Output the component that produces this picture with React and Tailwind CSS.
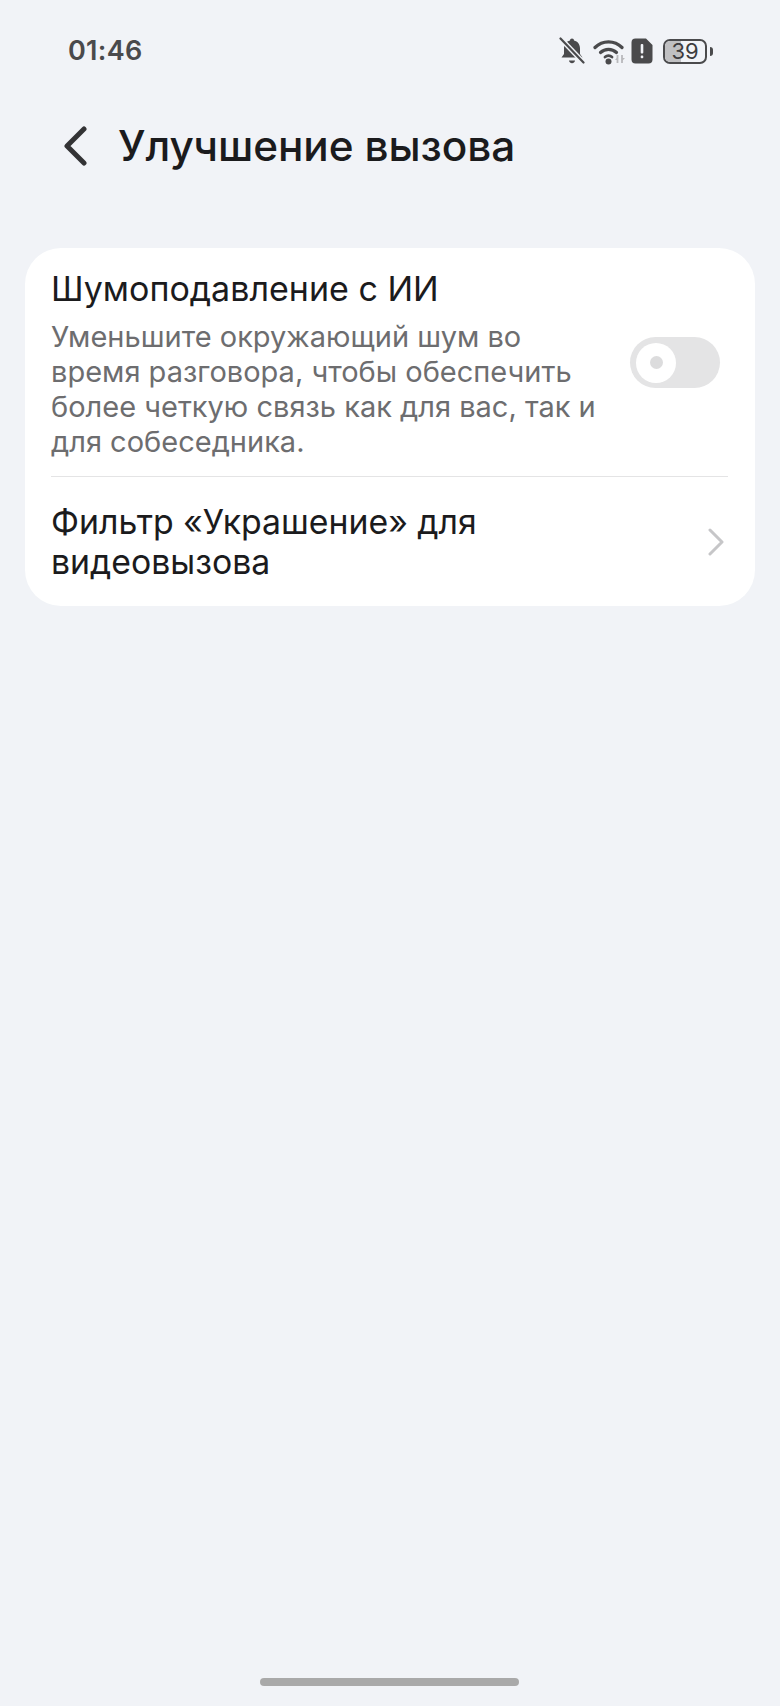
const BellOff = () => (
  <svg width="26" height="28" viewBox="0 0 26 28" fill="none">
    <path d="M13 1.500c1.200 0 2 .8 2 1.900 3.800.9 6 4 6 8v5.500l2.500 3.600H2.500L5 16.900v-5.500c0-4 2.200-7.100 6-8 0-1.100.8-1.900 2-1.900z" fill="#4a4a4c" />
    <path d="M10 23.500h6c-.3 1.700-1.500 2.800-3 2.800s-2.700-1.100-3-2.800z" fill="#4a4a4c" />
    <path d="M2.500 2.500 24 25" stroke="#f1f3f7" strokeWidth="5" />
    <path d="M1.500 1.500 24.500 25.500" stroke="#4a4a4c" strokeWidth="2.200" strokeLinecap="round" />
  </svg>
)

const Wifi = () => (
  <svg width="33" height="27" viewBox="0 0 33 27" fill="none">
    <path d="M2 9.500C9.500 2 21.500 2 29 9.500" stroke="#4a4a4c" strokeWidth="3.200" strokeLinecap="round" />
    <path d="M7.500 14.500c4.500-4.300 11.500-4.300 16 0" stroke="#4a4a4c" strokeWidth="3.200" strokeLinecap="round" />
    <path d="M12 19c2-1.700 5-1.700 7 0" stroke="#4a4a4c" strokeWidth="2.800" strokeLinecap="round" />
    <circle cx="15.500" cy="23.500" r="3" fill="#4a4a4c" />
    <path d="M24.500 17v8M29 17v8" stroke="#b9b9bc" strokeWidth="1.800" />
    <path d="M22 22l2.500-3v3h-2.500zM32 20l-3 3v-3h3z" fill="#b9b9bc" />
  </svg>
)

const SimAlert = () => (
  <svg width="22" height="26" viewBox="0 0 22 26">
    <path d="M4.500 0.500H15l6.500 6.500v14.500a4 4 0 0 1-4 4h-13a4 4 0 0 1-4-4v-17a4 4 0 0 1 4-4z" fill="#4a4a4c" />
    <rect x="9.700" y="6" width="2.600" height="9.500" rx="1" fill="#f1f3f7" />
    <rect x="9.700" y="17.500" width="2.600" height="2.800" rx="1" fill="#f1f3f7" />
  </svg>
)

const Battery = () => (
  <div className="flex items-center gap-[3px]">
    <div className="relative w-[44px] h-[25px] rounded-[7px] border-2 border-[#4a4a4c] overflow-hidden">
      <div className="h-full w-[39%] bg-[#c0c0c2]" />
      <span className="absolute inset-0 flex items-center justify-center text-[22px] leading-none text-[#3c3c3e] font-normal">39</span>
    </div>
    <div className="w-[3px] h-[9px] rounded-r-sm bg-[#4a4a4c]" />
  </div>
)

const Toggle = () => (
  <div className="w-[90px] h-[51px] rounded-full bg-[#e4e4e5] flex items-center pl-[6px] shrink-0">
    <div className="w-[40px] h-[40px] rounded-full bg-white flex items-center justify-center">
      <div className="w-[13px] h-[13px] rounded-full bg-[#dcdcdd]" />
    </div>
  </div>
)

export default function App() {
  return (
    <div className="w-[780px] h-[1706px] bg-[#f1f3f7] flex flex-col font-['Inter',sans-serif] overflow-hidden">
      <div className="h-[102px] flex items-center justify-between pl-[68px] pr-[67px]">
        <span className="text-[27px] font-semibold text-[#4a4a4c] tracking-[0.3px]">01:46</span>
        <div className="flex items-center">
          <BellOff />
          <div className="ml-[8px]"><Wifi /></div>
          <div className="ml-[5px]"><SimAlert /></div>
          <div className="ml-[10px]"><Battery /></div>
        </div>
      </div>

      <div className="h-[88px] flex items-center pl-[63px]">
        <svg width="24" height="42" viewBox="0 0 24 42" fill="none">
          <path d="M21 4 4 21 21 38" stroke="#333335" strokeWidth="5" strokeLinecap="round" strokeLinejoin="round" />
        </svg>
        <h1 className="ml-[31px] text-[42.300px] font-medium text-[#1b1b1d] tracking-[-0.1px]">Улучшение вызова</h1>
      </div>

      <div className="mt-[58px] mx-[25px] bg-white rounded-[36px] pl-[26px] pr-[27px]">
        <div className="flex items-center justify-between pt-[18px] pb-[17px] border-b border-[#e4e4e5]">
          <div className="w-[550px]">
            <div className="text-[34px] leading-[46px] text-[#1b1b1d]">Шумоподавление с ИИ</div>
            <p className="mt-[7px] text-[29px] leading-[35px] text-[#6d6d6f]">
              Уменьшите окружающий шум во время разговора, чтобы обеспечить более четкую связь как для вас, так и для собеседника.
            </p>
          </div>
          <div className="mr-[8px]"><Toggle /></div>
        </div>
        <div className="flex items-center justify-between pt-[25px] pb-[24px]">
          <div className="text-[33.800px] leading-[40px] text-[#1b1b1d] w-[480px]">Фильтр «Украшение» для видеовызова</div>
          <svg width="18" height="28" viewBox="0 0 18 28" fill="none" className="mr-[3px]">
            <path d="M3 2 15 14 3 26" stroke="#c6c6c8" strokeWidth="3" strokeLinecap="round" strokeLinejoin="round" />
          </svg>
        </div>
      </div>

      <div className="flex-1" />
      <div className="h-[28px] flex justify-center">
        <div className="w-[259px] h-[8px] rounded-full bg-[#a9a9a9] -ml-[1px]" />
      </div>
    </div>
  )
}
